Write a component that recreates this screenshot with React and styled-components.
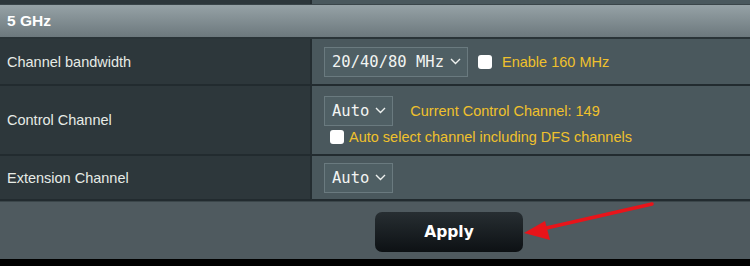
import React from "react";
import styled, { createGlobalStyle } from "styled-components";

const GlobalStyle = createGlobalStyle`
  html, body {
    margin: 0;
    padding: 0;
    background: #000;
  }
  body {
    font-family: "Liberation Sans", Arial, sans-serif;
  }
`;

const Page = styled.div`
  width: 750px;
  height: 266px;
  background: #000;
  overflow: hidden;
  position: relative;
`;

const Table = styled.div`
  display: grid;
  grid-template-columns: 312px 1fr;
`;

const Stub = styled.div`
  height: 4px;
  background: ${(p) => (p.$dark ? "#2d373b" : "#4a585d")};
  border-right: ${(p) => (p.$dark ? "2px solid #242d31" : "none")};
`;

const Header = styled.div`
  grid-column: 1 / -1;
  height: 32px;
  border-top: 1px solid #3a4549;
  border-bottom: 2px solid #2a3438;
  background: linear-gradient(#96a2a6, #6c787d);
  display: flex;
  align-items: center;
  padding-left: 7px;
  color: #fff;
  font-weight: bold;
  font-size: 15.5px;
`;

const Label = styled.div`
  height: ${(p) => p.$h}px;
  background: #2d373b;
  border-right: 2px solid #242d31;
  border-bottom: 2px solid #222b2f;
  display: flex;
  align-items: center;
  padding-left: 7px;
  color: #e6ebe6;
  font-size: 14.5px;
`;

const Cell = styled.div`
  height: ${(p) => p.$h}px;
  background: #4a585d;
  border-bottom: 2px solid #222b2f;
  padding-left: 12px;
  display: flex;
  flex-direction: column;
  justify-content: center;
  gap: 3px;
`;

const Line = styled.div`
  display: flex;
  align-items: center;
  gap: ${(p) => p.$gap || 10}px;
`;

const Select = styled.div`
  height: 30px;
  box-sizing: border-box;
  border: 1px solid #6a7a7f;
  background: #4f5f64;
  display: flex;
  align-items: center;
  padding: 0 6px 0 7px;
  gap: 6px;
  color: #f2f4f2;
  font-family: "DejaVu Sans Mono", "Liberation Mono", monospace;
  font-size: 15.5px;
`;

const Check = styled.span`
  width: 14px;
  height: 14px;
  border-radius: 3px;
  background: #fff;
  display: inline-block;
  margin-left: ${(p) => p.$ml || 0}px;
`;

const Note = styled.span`
  color: #f0c12c;
  font-size: 14.5px;
`;

const Footer = styled.div`
  height: 58px;
  background: #4f5a5f;
  border-top: 1px solid #3b464a;
  display: flex;
  align-items: center;
  padding: 2px 0 0 375px;
  box-sizing: border-box;
`;

const ApplyButton = styled.button`
  width: 148px;
  height: 40px;
  border: none;
  border-radius: 7px;
  background: linear-gradient(#272e32, #0d1114);
  color: #fff;
  font-family: "DejaVu Sans", Verdana, sans-serif;
  font-weight: bold;
  font-size: 15.5px;
`;

const Arrow = styled.svg`
  position: absolute;
  left: 0;
  top: 0;
  pointer-events: none;
`;

function Chevron() {
  return (
    <svg width="11" height="7" viewBox="0 0 11 7">
      <path d="M1 1 L5.5 5.5 L10 1" fill="none" stroke="#eef1ef" strokeWidth="1.4" />
    </svg>
  );
}

export default function App() {
  return (
    <Page>
      <GlobalStyle />
      <Table>
        <Stub $dark />
        <Stub />
        <Header>5 GHz</Header>

        <Label $h={45}>Channel bandwidth</Label>
        <Cell $h={45}>
          <Line $gap={10}>
            <Select>20/40/80 MHz <Chevron /></Select>
            <Check />
            <Note>Enable 160 MHz</Note>
          </Line>
        </Cell>

        <Label $h={68}>Control Channel</Label>
        <Cell $h={68}>
          <Line $gap={17}>
            <Select>Auto <Chevron /></Select>
            <Note>Current Control Channel: 149</Note>
          </Line>
          <Line $gap={5}>
            <Check $ml={6} />
            <Note>Auto select channel including DFS channels</Note>
          </Line>
        </Cell>

        <Label $h={43}>Extension Channel</Label>
        <Cell $h={43}>
          <Line>
            <Select>Auto <Chevron /></Select>
          </Line>
        </Cell>
      </Table>
      <Footer>
        <ApplyButton>Apply</ApplyButton>
      </Footer>
      <Arrow width="750" height="266">
        <line x1="652" y1="204" x2="542" y2="229" stroke="#e8141a" strokeWidth="3.5" strokeLinecap="round" />
        <polygon points="524,233 545,221 550,240" fill="#e8141a" />
      </Arrow>
    </Page>
  );
}
